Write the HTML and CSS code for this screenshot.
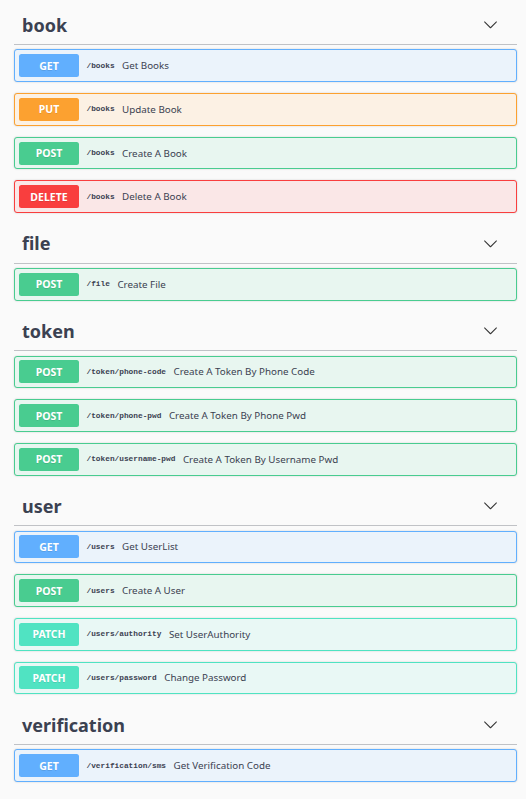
FILE: index.html
```html
<!DOCTYPE html>
<html>
<head>
<meta charset="utf-8">
<link rel="stylesheet" href="styles.css">
</head>
<body>
<div class="wrapper">

  <section class="tag-section">
    <h3 class="tag"><span class="tag-name">book</span>
      <svg class="arrow" viewBox="0 0 20 20"><path d="M17.418 6.109c.272-.268.709-.268.979 0s.271.701 0 .969l-7.908 7.83c-.27.268-.707.268-.979 0l-7.908-7.83c-.27-.268-.27-.701 0-.969.271-.268.709-.268.979 0L10 13.25l7.418-7.141z"/></svg>
    </h3>
    <div class="opblock get"><span class="method">GET</span><span class="path">/books</span><span class="desc">Get Books</span></div>
    <div class="opblock put"><span class="method">PUT</span><span class="path">/books</span><span class="desc">Update Book</span></div>
    <div class="opblock post"><span class="method">POST</span><span class="path">/books</span><span class="desc">Create A Book</span></div>
    <div class="opblock delete"><span class="method">DELETE</span><span class="path">/books</span><span class="desc">Delete A Book</span></div>
  </section>

  <section class="tag-section">
    <h3 class="tag"><span class="tag-name">file</span>
      <svg class="arrow" viewBox="0 0 20 20"><path d="M17.418 6.109c.272-.268.709-.268.979 0s.271.701 0 .969l-7.908 7.83c-.27.268-.707.268-.979 0l-7.908-7.83c-.27-.268-.27-.701 0-.969.271-.268.709-.268.979 0L10 13.25l7.418-7.141z"/></svg>
    </h3>
    <div class="opblock post"><span class="method">POST</span><span class="path">/file</span><span class="desc">Create File</span></div>
  </section>

  <section class="tag-section">
    <h3 class="tag"><span class="tag-name">token</span>
      <svg class="arrow" viewBox="0 0 20 20"><path d="M17.418 6.109c.272-.268.709-.268.979 0s.271.701 0 .969l-7.908 7.83c-.27.268-.707.268-.979 0l-7.908-7.83c-.27-.268-.27-.701 0-.969.271-.268.709-.268.979 0L10 13.25l7.418-7.141z"/></svg>
    </h3>
    <div class="opblock post"><span class="method">POST</span><span class="path">/token/phone-code</span><span class="desc">Create A Token By Phone Code</span></div>
    <div class="opblock post"><span class="method">POST</span><span class="path">/token/phone-pwd</span><span class="desc">Create A Token By Phone Pwd</span></div>
    <div class="opblock post"><span class="method">POST</span><span class="path">/token/username-pwd</span><span class="desc">Create A Token By Username Pwd</span></div>
  </section>

  <section class="tag-section">
    <h3 class="tag"><span class="tag-name">user</span>
      <svg class="arrow" viewBox="0 0 20 20"><path d="M17.418 6.109c.272-.268.709-.268.979 0s.271.701 0 .969l-7.908 7.83c-.27.268-.707.268-.979 0l-7.908-7.83c-.27-.268-.27-.701 0-.969.271-.268.709-.268.979 0L10 13.25l7.418-7.141z"/></svg>
    </h3>
    <div class="opblock get"><span class="method">GET</span><span class="path">/users</span><span class="desc">Get UserList</span></div>
    <div class="opblock post"><span class="method">POST</span><span class="path">/users</span><span class="desc">Create A User</span></div>
    <div class="opblock patch"><span class="method">PATCH</span><span class="path">/users/authority</span><span class="desc">Set UserAuthority</span></div>
    <div class="opblock patch"><span class="method">PATCH</span><span class="path">/users/password</span><span class="desc">Change Password</span></div>
  </section>

  <section class="tag-section">
    <h3 class="tag"><span class="tag-name">verification</span>
      <svg class="arrow" viewBox="0 0 20 20"><path d="M17.418 6.109c.272-.268.709-.268.979 0s.271.701 0 .969l-7.908 7.83c-.27.268-.707.268-.979 0l-7.908-7.83c-.27-.268-.27-.701 0-.969.271-.268.709-.268.979 0L10 13.25l7.418-7.141z"/></svg>
    </h3>
    <div class="opblock get"><span class="method">GET</span><span class="path">/verification/sms</span><span class="desc">Get Verification Code</span></div>
  </section>

</div>
</body>
</html>
```

FILE: styles.css
```css
html, body {
  margin: 0;
  padding: 0;
  background: #fafafa;
}

.wrapper {
  padding: 5.5px 9px 0 14px;
  font-family: "Noto Sans", "Open Sans", sans-serif;
  color: #3b4151;
}

.tag-section {
  display: block;
}

.tag {
  margin: 0 0 4.5px;
  height: 38.4px;
  padding: 0 19px 0 8px;
  border-bottom: 1px solid rgba(59, 65, 81, 0.3);
  display: flex;
  align-items: center;
  justify-content: space-between;
  box-sizing: content-box;
}

.tag-name {
  font-size: 18px;
  font-weight: 700;
  color: #3b4151;
  line-height: 24px;
}

.arrow {
  width: 15px;
  height: 15px;
  fill: #333;
}

.opblock {
  display: flex;
  align-items: center;
  height: 32.7px;
  box-sizing: border-box;
  margin: 0 0 11px;
  padding: 0 4px;
  border: 1px solid;
  border-radius: 3px;
  box-shadow: 0 0 2px rgba(0, 0, 0, 0.19);
}

.method {
  width: 60px;
  height: 23px;
  flex: none;
  display: flex;
  align-items: center;
  justify-content: center;
  border-radius: 2.5px;
  color: #fff;
  font-size: 10.5px;
  font-weight: 700;
  text-shadow: 0 1px 0 rgba(0, 0, 0, 0.1);
}

.path {
  padding: 0 7.5px;
  font-family: "Liberation Mono", monospace;
  font-size: 7.8px;
  font-weight: 700;
  color: #3b4151;
}

.desc {
  font-size: 9.8px;
  color: #3b4151;
}

.get { border-color: #61affe; background: #ebf3fb; }
.get .method { background: #61affe; }

.put { border-color: #fca130; background: #fcf1e4; }
.put .method { background: #fca130; }

.post { border-color: #49cc90; background: #e8f6f0; }
.post .method { background: #49cc90; }

.delete { border-color: #f93e3e; background: #fae7e7; }
.delete .method { background: #f93e3e; }

.patch { border-color: #50e3c2; background: #e9f8f5; }
.patch .method { background: #50e3c2; }
```
